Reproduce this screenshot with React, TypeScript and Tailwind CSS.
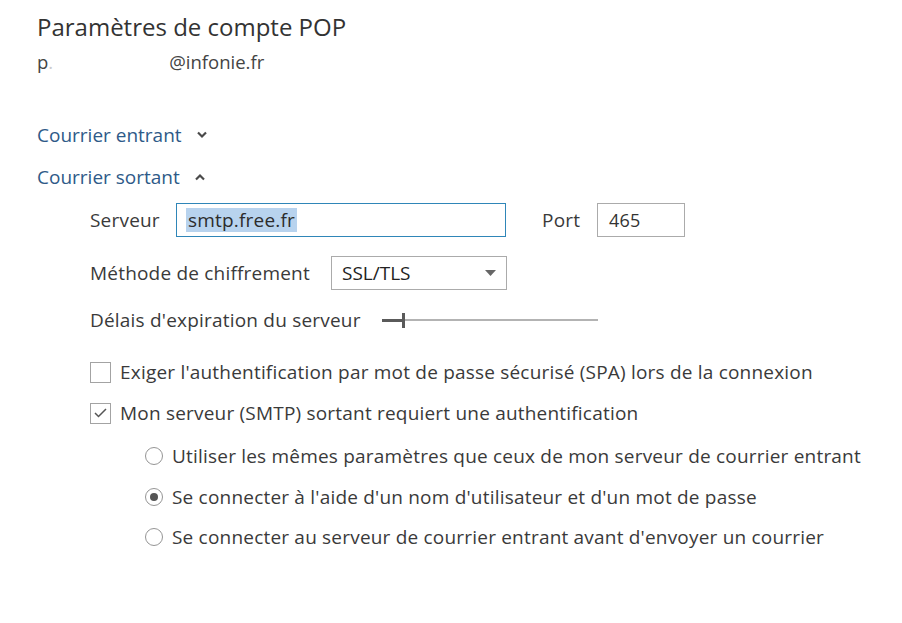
import React from "react";

const font = { fontFamily: '"Open Sans", "Noto Sans", sans-serif' };

function Chevron({ up }: { up?: boolean }) {
  return (
    <svg width="12" height="8" viewBox="0 0 12 8" className="ml-[14px]">
      {up ? (
        <path d="M2 6.5 L6 2.5 L10 6.5" fill="none" stroke="#4a4a4a" strokeWidth="2.2" />
      ) : (
        <path d="M2 1.5 L6 5.5 L10 1.5" fill="none" stroke="#4a4a4a" strokeWidth="2.2" />
      )}
    </svg>
  );
}

function Checkbox({ checked }: { checked?: boolean }) {
  return (
    <div className="w-[21px] h-[21px] border border-[#a3a3a3] bg-white flex items-center justify-center shrink-0">
      {checked && (
        <svg width="15" height="12" viewBox="0 0 15 12">
          <path d="M2 6 L5.5 9.5 L13 2" fill="none" stroke="#555" strokeWidth="1.5" />
        </svg>
      )}
    </div>
  );
}

function Radio({ checked }: { checked?: boolean }) {
  return (
    <div className="w-[18px] h-[18px] rounded-full border border-[#959595] bg-white flex items-center justify-center shrink-0">
      {checked && <div className="w-[8px] h-[8px] rounded-full bg-[#555]" />}
    </div>
  );
}

export default function App() {
  return (
    <div className="w-[902px] h-[623px] bg-white text-[#3a3a3a] pl-[37px] pt-[10px]" style={font}>
      <div className="text-[24px] leading-[34px] text-[#333]">Paramètres de compte POP</div>
      <div className="text-[18.5px] leading-[26px] mt-[5px] text-[#444] flex">
        <span>p</span>
        <span className="text-[#ccc]">.</span>
        <span className="ml-[116px]">@infonie.fr</span>
      </div>

      <div className="mt-[47px] flex items-center text-[19px] leading-[26px] text-[#2e5a88]">
        Courrier entrant
        <Chevron />
      </div>
      <div className="mt-[16px] flex items-center text-[19px] leading-[26px] text-[#2e5a88]">
        Courrier sortant
        <Chevron up />
      </div>

      <div className="pl-[53px] text-[19px] tracking-[0.2px]">
        <div className="mt-[13px] flex items-center h-[34px]">
          <span className="w-[86px]">Serveur</span>
          <div className="w-[330px] h-[34px] border border-[#2f86b8] flex items-center pl-[9px]">
            <span className="bg-[#b8d3ee] text-[#2c2c2c] leading-[24px] px-[2px]">smtp.free.fr</span>
          </div>
          <span className="ml-[36px] w-[55px]">Port</span>
          <div className="w-[88px] h-[34px] border border-[#ababab] flex items-center pl-[11px] text-[#333] text-[18px]">465</div>
        </div>

        <div className="mt-[19px] flex items-center h-[34px]">
          <span className="w-[241px]">Méthode de chiffrement</span>
          <div className="w-[176px] h-[34px] border border-[#ababab] flex items-center justify-between pl-[10px] pr-[10px] text-[#222] text-[19px] tracking-[0px]">
            SSL/TLS
            <svg width="11" height="6" viewBox="0 0 11 6">
              <path d="M0 0 L11 0 L5.5 6 Z" fill="#666" />
            </svg>
          </div>
        </div>

        <div className="mt-[15px] flex items-center h-[30px]">
          <span className="w-[292px]">Délais d'expiration du serveur</span>
          <div className="flex items-center">
            <div className="w-[20px] h-[3px] bg-[#5a5a5a]" />
            <div className="w-[3px] h-[15px] bg-[#5a5a5a]" />
            <div className="w-[193px] h-[2px] bg-[#b3b3b3]" />
          </div>
        </div>

        <div className="mt-[24px] flex items-center h-[26px]">
          <Checkbox />
          <span className="ml-[9px]">Exiger l'authentification par mot de passe sécurisé (SPA) lors de la connexion</span>
        </div>
        <div className="mt-[15px] flex items-center h-[26px]">
          <Checkbox checked />
          <span className="ml-[9px]">Mon serveur (SMTP) sortant requiert une authentification</span>
        </div>

        <div className="pl-[55px]">
          <div className="mt-[17px] flex items-center h-[26px]">
            <Radio />
            <span className="ml-[9px]">Utiliser les mêmes paramètres que ceux de mon serveur de courrier entrant</span>
          </div>
          <div className="mt-[15px] flex items-center h-[26px]">
            <Radio checked />
            <span className="ml-[9px]">Se connecter à l'aide d'un nom d'utilisateur et d'un mot de passe</span>
          </div>
          <div className="mt-[14px] flex items-center h-[26px]">
            <Radio />
            <span className="ml-[9px]">Se connecter au serveur de courrier entrant avant d'envoyer un courrier</span>
          </div>
        </div>
      </div>
    </div>
  );
}
